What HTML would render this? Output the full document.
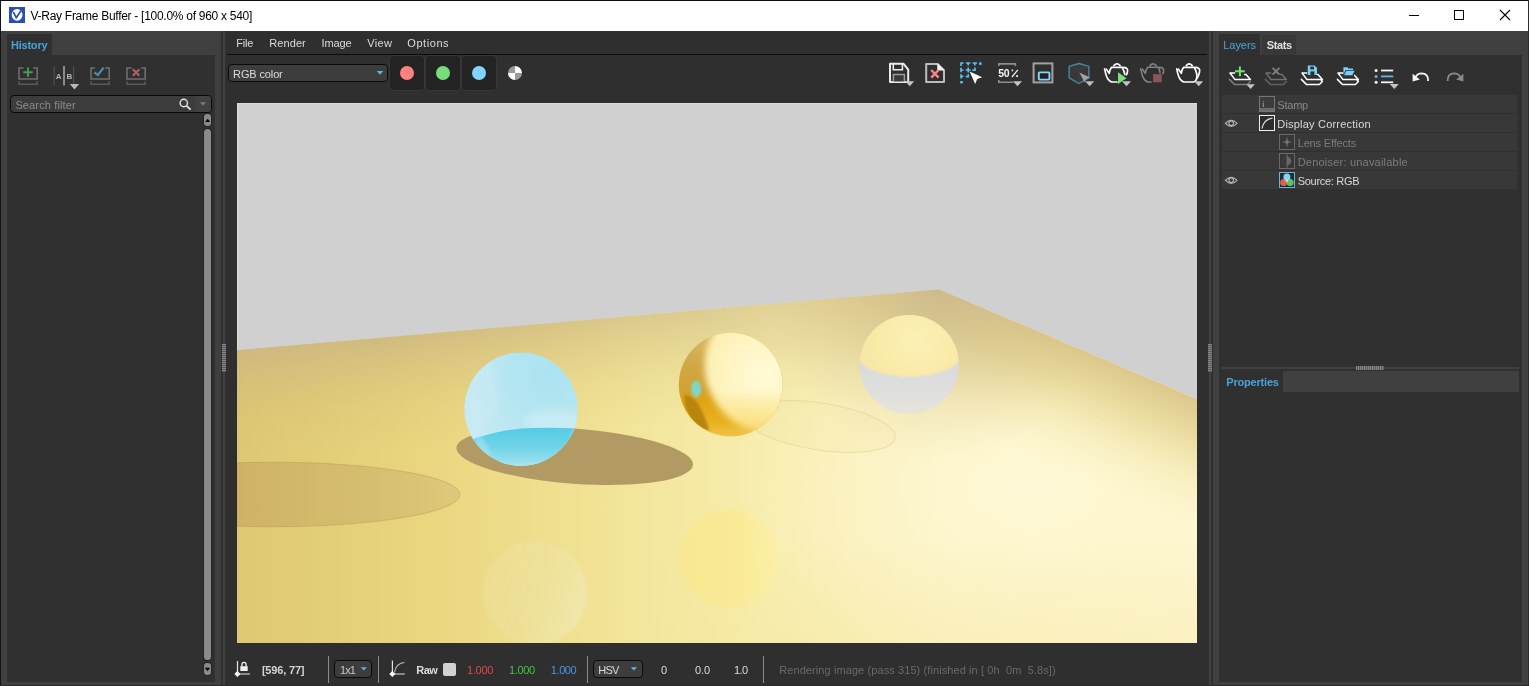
<!DOCTYPE html>
<html lang="en">
<head>
<meta charset="utf-8">
<title>V-Ray Frame Buffer</title>
<style>
html,body{margin:0;padding:0;}
body{width:1529px;height:686px;overflow:hidden;background:#404040;position:relative;font-family:"Liberation Sans",sans-serif;}
.a{position:absolute;}
.tx{position:absolute;line-height:1;white-space:pre;}
.panel{background:#303030;}
.row{position:absolute;left:1222px;width:295px;height:18px;background:#383838;}
.sep{position:absolute;width:1px;top:656px;height:27px;background:#8c8c8c;}
.combo{position:absolute;box-sizing:border-box;border:1px solid #0a0a0a;border-radius:4px;background:#3d3d3d;}
.chbtn{position:absolute;top:55px;width:36px;height:36px;box-sizing:border-box;background:#232323;border:1px solid #373737;border-radius:4px;}
.dot{position:absolute;width:14px;height:14px;border-radius:50%;top:66px;}
svg{position:absolute;overflow:visible;}
</style>
</head>
<body>
<!-- window frame -->
<div class="a" style="left:0;top:0;width:1529px;height:1px;background:#0c0c0c"></div>
<div class="a" style="left:0;top:0;width:1px;height:686px;background:#141414"></div>
<div class="a" style="left:1528px;top:0;width:1px;height:686px;background:#2c2c2c"></div>
<div class="a" style="left:0;top:685px;width:1529px;height:1px;background:#2a2a2a"></div>
<!-- title bar -->
<div class="a" style="left:1px;top:1px;width:1527px;height:30px;background:#ffffff"></div>

<!-- left (History) panel -->
<div class="a panel" style="left:7px;top:34px;width:45px;height:21px;"></div>
<div class="a panel" style="left:7px;top:55px;width:208px;height:627px;"></div>
<div class="combo" style="left:10px;top:95px;width:202px;height:18px;background:#3c3c3c"></div>
<div class="a" style="left:195px;top:96px;width:16px;height:16px;background:#424242;border-radius:0 3px 3px 0"></div>
<!-- scrollbar -->
<div class="a" style="left:204px;top:114px;width:7px;height:12px;background:#8a8a8a;border-radius:3px;box-shadow:0 0 0 1px #242424"></div>
<div class="a" style="left:204px;top:129px;width:7px;height:531px;background:#8a8a8a;border-radius:3.5px;box-shadow:0 0 0 1px #242424"></div>
<div class="a" style="left:204px;top:663px;width:7px;height:12px;background:#8a8a8a;border-radius:3px;box-shadow:0 0 0 1px #242424"></div>

<!-- splitters -->
<div class="a" style="left:221px;top:31px;width:2px;height:654px;background:#303030"></div>
<div class="a" style="left:223px;top:31px;width:2px;height:654px;background:#414141"></div>
<div class="a" style="left:1209px;top:31px;width:2px;height:654px;background:#414141"></div>
<div class="a" style="left:1211px;top:31px;width:2px;height:654px;background:#303030"></div>

<!-- main panel -->
<div class="a" style="left:225px;top:31px;width:984px;height:654px;background:#2f2f2f"></div>
<div class="a" style="left:227px;top:54px;width:980px;height:1px;background:#0c0c0c"></div>
<div class="a" style="left:222px;top:344px;width:4px;height:28px;background:repeating-linear-gradient(to bottom,#858585 0,#858585 1px,#5c5c5c 1px,#5c5c5c 2px)"></div>
<div class="a" style="left:1208px;top:344px;width:4px;height:28px;background:repeating-linear-gradient(to bottom,#858585 0,#858585 1px,#5c5c5c 1px,#5c5c5c 2px)"></div>
<div class="combo" style="left:228px;top:64px;width:160px;height:18px;"></div>
<div class="chbtn" style="left:389px"></div>
<div class="chbtn" style="left:425px"></div>
<div class="chbtn" style="left:461px"></div>
<div class="dot" style="left:400px;background:#ff8080"></div>
<div class="dot" style="left:436px;background:#77dd7a"></div>
<div class="dot" style="left:472px;background:#80d4ff"></div>
<div class="dot" style="left:508px;background:conic-gradient(#ffffff 0 90deg,#9a9a9a 90deg 180deg,#ffffff 180deg 270deg,#9a9a9a 270deg 360deg)"></div>

<!-- status bar -->
<div class="sep" style="left:328px"></div>
<div class="sep" style="left:378px"></div>
<div class="sep" style="left:587px"></div>
<div class="sep" style="left:763px"></div>
<div class="combo" style="left:334px;top:660px;width:38px;height:18px;"></div>
<div class="combo" style="left:593px;top:660px;width:50px;height:18px;"></div>
<div class="a" style="left:443px;top:663px;width:13px;height:13px;background:#d2d2d2;border-radius:2px"></div>

<!-- right panel -->
<div class="a panel" style="left:1219px;top:34px;width:41px;height:21px;"></div>
<div class="a" style="left:1262px;top:35px;width:34px;height:20px;background:#383838"></div>
<div class="a panel" style="left:1219px;top:55px;width:303px;height:627px;"></div>
<div class="row" style="top:95px"></div>
<div class="row" style="top:114px"></div>
<div class="row" style="top:133px"></div>
<div class="row" style="top:152px"></div>
<div class="row" style="top:171px"></div>
<div class="a" style="left:1222px;top:367px;width:297px;height:2px;background:#404040"></div>
<div class="a" style="left:1356px;top:366px;width:28px;height:4px;background:repeating-linear-gradient(to right,#858585 0,#858585 1px,#5c5c5c 1px,#5c5c5c 2px)"></div>
<div class="a" style="left:1283px;top:371px;width:236px;height:21px;background:#404040"></div>

<!-- rendered image -->
<svg style="left:237px;top:103px;overflow:hidden" width="960" height="540" viewBox="0 0 960 540">
<defs>
  <linearGradient id="fl_base" gradientUnits="userSpaceOnUse" x1="0" y1="0" x2="960" y2="0">
    <stop offset="0" stop-color="#dec872"/>
    <stop offset="0.2" stop-color="#e9d67f"/>
    <stop offset="0.4" stop-color="#f2e498"/>
    <stop offset="0.55" stop-color="#f7edae"/>
    <stop offset="0.75" stop-color="#fcf4c8"/>
    <stop offset="1" stop-color="#fdf6d0"/>
  </linearGradient>
  <linearGradient id="refl_pale" gradientUnits="userSpaceOnUse" x1="250" y1="470" x2="350" y2="510">
    <stop offset="0" stop-color="#f0eabc" stop-opacity="0.22"/>
    <stop offset="0.5" stop-color="#f0eabc" stop-opacity="0.2"/>
    <stop offset="1" stop-color="#f2ecc6" stop-opacity="0.5"/>
  </linearGradient>
  <radialGradient id="fl_hi" gradientUnits="userSpaceOnUse" cx="790" cy="385" r="300" gradientTransform="translate(790 385) scale(1 0.6) translate(-790 -385)">
    <stop offset="0" stop-color="#fef8d8" stop-opacity="0.9"/>
    <stop offset="0.4" stop-color="#fdf6d0" stop-opacity="0.6"/>
    <stop offset="1" stop-color="#fcf3c6" stop-opacity="0"/>
  </radialGradient>
  <!-- darkening toward far-left edge (perpendicular to the left horizon line) -->
  <linearGradient id="fl_farL" gradientUnits="userSpaceOnUse" x1="351" y1="216.85" x2="360.5" y2="326.4">
    <stop offset="0" stop-color="#cbb682" stop-opacity="0.86"/>
    <stop offset="0.25" stop-color="#ceb880" stop-opacity="0.58"/>
    <stop offset="0.6" stop-color="#d2bb7c" stop-opacity="0.22"/>
    <stop offset="1" stop-color="#d6be78" stop-opacity="0"/>
  </linearGradient>
  <linearGradient id="shL" gradientUnits="userSpaceOnUse" x1="0" y1="0" x2="223" y2="0">
    <stop offset="0" stop-color="#bf9f5c" stop-opacity="0.52"/>
    <stop offset="0.6" stop-color="#c2a562" stop-opacity="0.44"/>
    <stop offset="1" stop-color="#c6aa68" stop-opacity="0.34"/>
  </linearGradient>
  <!-- darkening toward far-right edge -->
  <linearGradient id="fl_farR" gradientUnits="userSpaceOnUse" x1="831" y1="241.2" x2="786" y2="347.2">
    <stop offset="0" stop-color="#dac588" stop-opacity="0.95"/>
    <stop offset="0.3" stop-color="#e2cf8a" stop-opacity="0.7"/>
    <stop offset="0.65" stop-color="#ecdc98" stop-opacity="0.3"/>
    <stop offset="1" stop-color="#f4e6a8" stop-opacity="0"/>
  </linearGradient>
  <radialGradient id="fl_corner" gradientUnits="userSpaceOnUse" cx="702" cy="186" r="170">
    <stop offset="0" stop-color="#c8b68c" stop-opacity="0.7"/>
    <stop offset="0.5" stop-color="#cfbc8a" stop-opacity="0.35"/>
    <stop offset="1" stop-color="#d6c288" stop-opacity="0"/>
  </radialGradient>
  <linearGradient id="mL" gradientUnits="userSpaceOnUse" x1="0" y1="0" x2="960" y2="0">
    <stop offset="0" stop-color="#fff"/>
    <stop offset="0.15" stop-color="#f4f4f4"/>
    <stop offset="0.42" stop-color="#b0b0b0"/>
    <stop offset="1" stop-color="#a8a8a8"/>
  </linearGradient>
  <mask id="maskL" maskUnits="userSpaceOnUse" x="0" y="180" width="960" height="360"><rect x="0" y="180" width="960" height="360" fill="url(#mL)"/></mask>
  <linearGradient id="fl_bot" gradientUnits="userSpaceOnUse" x1="0" y1="440" x2="0" y2="540">
    <stop offset="0" stop-color="#f4e49a" stop-opacity="0"/>
    <stop offset="1" stop-color="#f4e49a" stop-opacity="0.28"/>
  </linearGradient>
  <linearGradient id="refl_yel" gradientUnits="userSpaceOnUse" x1="445" y1="0" x2="542" y2="0">
    <stop offset="0" stop-color="#f9e88e"/>
    <stop offset="0.6" stop-color="#faea94"/>
    <stop offset="1" stop-color="#fdf0a6"/>
  </linearGradient>
  <clipPath id="floorclip"><polygon points="0,247.3 702,186.4 960,296 960,540 0,540"/></clipPath>

  <!-- cyan sphere -->
  <radialGradient id="cy_top" gradientUnits="userSpaceOnUse" cx="312" cy="272" r="105">
    <stop offset="0" stop-color="#abe3f0"/>
    <stop offset="0.35" stop-color="#b2e5f1"/>
    <stop offset="0.7" stop-color="#c0e8f2"/>
    <stop offset="1" stop-color="#cdebf3"/>
  </radialGradient>
  <linearGradient id="cy_low" gradientUnits="userSpaceOnUse" x1="0" y1="325" x2="0" y2="363">
    <stop offset="0" stop-color="#54cbe5"/>
    <stop offset="0.5" stop-color="#6fd4e9"/>
    <stop offset="0.85" stop-color="#93deed"/>
    <stop offset="1" stop-color="#b0e7f1"/>
  </linearGradient>
  <clipPath id="cyclip"><circle cx="284" cy="306.1" r="56.6"/></clipPath>

  <!-- yellow sphere -->
  <linearGradient id="ye_dark" gradientUnits="userSpaceOnUse" x1="0" y1="230" x2="0" y2="334">
    <stop offset="0" stop-color="#dabb66"/>
    <stop offset="0.3" stop-color="#cfa848"/>
    <stop offset="0.56" stop-color="#d3a132"/>
    <stop offset="0.63" stop-color="#e0a216"/>
    <stop offset="0.85" stop-color="#e8b020"/>
    <stop offset="1" stop-color="#f0c548"/>
  </linearGradient>
  <radialGradient id="ye_lit" gradientUnits="userSpaceOnUse" cx="528" cy="272" r="70">
    <stop offset="0" stop-color="#fffad8"/>
    <stop offset="0.5" stop-color="#fef5c4"/>
    <stop offset="0.85" stop-color="#fdf0b4"/>
    <stop offset="1" stop-color="#fbeaa4"/>
  </radialGradient>
  <linearGradient id="ye_low" gradientUnits="userSpaceOnUse" x1="0" y1="288" x2="0" y2="334">
    <stop offset="0" stop-color="#f8dc70" stop-opacity="0"/>
    <stop offset="0.35" stop-color="#f8dc70" stop-opacity="0.4"/>
    <stop offset="1" stop-color="#f3cc48" stop-opacity="0.75"/>
  </linearGradient>
  <clipPath id="yelitclip"><circle cx="536.7" cy="262.2" r="69"/></clipPath>
  <clipPath id="yeclip"><circle cx="493.7" cy="281.6" r="51.9"/></clipPath>

  <!-- glass sphere -->
  <radialGradient id="gl_top" gradientUnits="userSpaceOnUse" cx="680" cy="238" r="62">
    <stop offset="0" stop-color="#fcf0b6"/>
    <stop offset="0.6" stop-color="#f9eaa8"/>
    <stop offset="1" stop-color="#f6e6a4"/>
  </radialGradient>
  <linearGradient id="gl_low" gradientUnits="userSpaceOnUse" x1="0" y1="250" x2="0" y2="311">
    <stop offset="0" stop-color="#d8d8dc"/>
    <stop offset="0.5" stop-color="#dddddd"/>
    <stop offset="0.85" stop-color="#e4e2dc"/>
    <stop offset="1" stop-color="#e7e4d6"/>
  </linearGradient>
  <clipPath id="glclip"><circle cx="672.2" cy="261.5" r="49.6"/></clipPath>
  <filter id="blur2" x="-20%" y="-20%" width="140%" height="140%"><feGaussianBlur stdDeviation="2"/></filter>
  <filter id="blur4" x="-20%" y="-20%" width="140%" height="140%"><feGaussianBlur stdDeviation="3.2"/></filter>
  <filter id="soft" x="-5%" y="-5%" width="110%" height="110%"><feGaussianBlur stdDeviation="0.55"/></filter>
  <filter id="blur1" x="-20%" y="-20%" width="140%" height="140%"><feGaussianBlur stdDeviation="0.8"/></filter>
</defs>

<rect x="0" y="0" width="960" height="540" fill="#d0d0d0"/>
<rect x="0" y="0" width="960" height="1" fill="#dcdcdc"/>
<rect x="0" y="0" width="1" height="247" fill="#dcdcdc"/>
<g clip-path="url(#floorclip)">
  <rect x="0" y="180" width="960" height="360" fill="url(#fl_base)"/>
  <rect x="0" y="180" width="960" height="360" fill="url(#fl_hi)"/>
  <rect x="0" y="180" width="960" height="360" fill="url(#fl_farL)" mask="url(#maskL)"/>
  <rect x="0" y="180" width="960" height="360" fill="url(#fl_farR)"/>
  <rect x="0" y="180" width="960" height="360" fill="url(#fl_corner)"/>
  <rect x="380" y="440" width="580" height="100" fill="url(#fl_bot)"/>

  <!-- reflections -->
  <circle cx="298" cy="490" r="52" fill="url(#refl_pale)" filter="url(#blur1)"/>
  <circle cx="492.5" cy="455.8" r="49" fill="url(#refl_yel)" fill-opacity="0.85" filter="url(#blur2)"/>

  <!-- left big shadow -->
  <ellipse cx="35" cy="391.5" rx="188" ry="32.3" fill="url(#shL)" stroke="#b09050" stroke-opacity="0.4" stroke-width="1"/>
  <!-- glass caustic ellipse -->
  <ellipse cx="583" cy="323.5" rx="76" ry="23.5" transform="rotate(8.6 583 323.5)" fill="#e8d890" fill-opacity="0.10" stroke="#d8c27a" stroke-opacity="0.40" stroke-width="1"/>
  <!-- cyan sphere shadow -->
  <ellipse cx="337.7" cy="353.2" rx="118.6" ry="27.5" transform="rotate(4.2 337.7 353.2)" fill="#b29a65"/>
</g>

<g filter="url(#soft)">
<!-- cyan sphere -->
<circle cx="284" cy="306.1" r="56.6" fill="url(#cy_top)"/>
<g clip-path="url(#cyclip)">
  <ellipse cx="318" cy="318" rx="30" ry="12" fill="#d4f0f6" fill-opacity="0.55" filter="url(#blur4)"/>
  <ellipse cx="245" cy="290" rx="16" ry="34" fill="#cdebf4" fill-opacity="0.5" filter="url(#blur4)"/>
  <path d="M 222,342 Q 250,328.5 284,325.4 Q 312,324 345,325.6 L 345,370 L 222,370 Z" fill="url(#cy_low)"/>
  <ellipse cx="246" cy="345" rx="5" ry="14" transform="rotate(-28 246 345)" fill="#b6e8f2" fill-opacity="0.55" filter="url(#blur2)"/>
  <ellipse cx="338" cy="333" rx="4" ry="9" transform="rotate(20 338 333)" fill="#c6eef5" fill-opacity="0.8" filter="url(#blur1)"/>
</g>

<!-- yellow sphere -->
<circle cx="493.7" cy="281.6" r="51.9" fill="url(#ye_dark)"/>
<g clip-path="url(#yeclip)">
  <path d="M447,291.9 L447.9,300.7 Q448.8,305.5 450.5,309.4 Q452.6,314.2 455.7,318.2 Q459.2,322.4 463.6,325.1 L471.5,327.8 L472.3,327.8 L470.6,321.7 Q468.8,316 466.2,311.2 Q464,305.4 461,300.7 Q457.8,296.4 454,293.7 Q450.4,292 447,291.9 Z" fill="#b4820e" fill-opacity="0.9" filter="url(#blur1)"/>
  <g filter="url(#blur4)">
    <circle cx="536.7" cy="262.2" r="69" fill="url(#ye_lit)"/>
    <g clip-path="url(#yelitclip)"><rect x="440" y="286" width="140" height="60" fill="url(#ye_low)"/></g>
  </g>
  <ellipse cx="459.2" cy="285.8" rx="5" ry="8.4" fill="#80d6c6" filter="url(#blur1)"/>
</g>

<!-- glass sphere -->
<circle cx="672.2" cy="261.5" r="49.6" fill="url(#gl_low)"/>
<g clip-path="url(#glclip)">
  <g filter="url(#blur1)">
    <rect x="615" y="205" width="115" height="48" fill="url(#gl_top)"/>
    <ellipse cx="672.5" cy="252.7" rx="51" ry="21" fill="url(#gl_top)"/>
  </g>
</g>
</g>
</svg>


<!-- icons -->
<svg style="left:0;top:0" width="1529" height="686" viewBox="0 0 1529 686" font-family="Liberation Sans, sans-serif">
<!-- title icon -->
<rect x="9" y="7" width="16" height="16" fill="#2a4fb0"/>
<ellipse cx="17.1" cy="14.8" rx="5.4" ry="5.9" fill="#ffffff"/>
<path d="M13.7 12.6 L16.3 17.8 L20.6 11.2" fill="none" stroke="#2a4fb0" stroke-width="1.7" stroke-linecap="round" stroke-linejoin="round"/>
<!-- window controls -->
<rect x="1409" y="15" width="10" height="1" fill="#000"/>
<rect x="1454.5" y="10.5" width="9" height="9" fill="none" stroke="#000" stroke-width="1"/>
<path d="M1500 10 L1510 20 M1510 10 L1500 20" stroke="#000" stroke-width="1.1" fill="none"/>

<!-- history toolbar -->
<g fill="none" stroke="#6e6e6e" stroke-width="1.6">
  <path d="M23.5 68 H19 V79 H37.2 V68 H33"/>
  <path d="M19 81.5 V84.3 H37.2 V81.5" stroke="#5a5a5a"/>
  <path d="M95 68 H91 V79 H109.2 V68 H105"/>
  <path d="M91 81.5 V84.3 H109.2 V81.5" stroke="#5a5a5a"/>
  <path d="M131.5 68 H127 V79 H145.2 V68 H141"/>
  <path d="M127 81.5 V84.3 H145.2 V81.5" stroke="#5a5a5a"/>
</g>
<path d="M23.3 72.2 H32.6 M27.95 67.4 V76.8" stroke="#4a9a4e" stroke-width="2" fill="none"/>
<path d="M94.4 72.3 L97.9 75 L103.6 67.6" stroke="#4a8cb4" stroke-width="2.2" fill="none"/>
<path d="M132.8 69.2 L139.4 75.8 M139.4 69.2 L132.8 75.8" stroke="#b06060" stroke-width="2.2" fill="none"/>
<rect x="53.6" y="66" width="1" height="19.5" fill="#555"/>
<rect x="63" y="66" width="2" height="19.5" fill="#8a8a8a"/>
<rect x="73.2" y="66" width="1" height="19.5" fill="#555"/>
<text x="55.8" y="79.3" font-size="8" font-weight="700" fill="#b4b4b4">A</text>
<text x="66.6" y="79.3" font-size="8" font-weight="700" fill="#b4b4b4">B</text>
<path d="M69.8 84 H79.2 L74.5 89.4 Z" fill="#b8b8b8"/>
<!-- search -->
<circle cx="183.8" cy="103" r="3.7" fill="none" stroke="#e4e4e4" stroke-width="1.4"/>
<path d="M186.6 105.8 L190.6 109.6" stroke="#e4e4e4" stroke-width="1.8" fill="none"/>
<path d="M200 102.2 H206 L203 105.6 Z" fill="#7c7c7c"/>
<!-- scrollbar arrows -->
<path d="M205.2 122 H210.2 L207.7 118.7 Z" fill="#000"/>
<path d="M204.8 667.8 H210.2 L207.5 671.2 Z" fill="#000"/>
<!-- combo arrows -->
<path d="M376.8 71.1 H383.2 L380 74.7 Z" fill="#5db7e0"/>
<path d="M360.8 667.2 H366.8 L363.8 670.6 Z" fill="#5db7e0"/>
<path d="M630.8 667.2 H637 L633.9 670.6 Z" fill="#5db7e0"/>

<!-- main toolbar: save -->
<path d="M890 63.8 H903.6 L908.2 69.6 V82 H890 Z" fill="none" stroke="#ececec" stroke-width="2" stroke-linejoin="round"/>
<path d="M893.3 64 V69.8 H902.4 V64" fill="none" stroke="#ececec" stroke-width="1.6"/>
<path d="M893.4 81.5 V74.6 H904.4 V81.5" fill="#3a3a3a" stroke="#9a9a9a" stroke-width="1.5"/>
<path d="M905.2 81.2 H914.2 L909.7 86.3 Z" fill="#c2c6ca"/>
<!-- clear -->
<path d="M926.2 64 H937.6 L944 70.2 V82 H926.2 Z" fill="none" stroke="#bcbcbc" stroke-width="2" stroke-linejoin="round"/>
<path d="M937.8 64.2 V70 H943.8 Z" fill="#f2f2f2" stroke="#f2f2f2" stroke-width="1" stroke-linejoin="round"/>
<path d="M931.2 70 L938.6 77.6 M938.6 70 L931.2 77.6" stroke="#ff8585" stroke-width="2.4" fill="none"/>
<!-- region select -->
<g fill="#5ec0ee">
  <path d="M960.2 62.3 H963.6 V63.8 H961.8 V66 H960.2 Z"/>
  <path d="M966 62.3 H970.4 V63.8 H969 V65.6 H967.4 V63.8 H966 Z"/>
  <path d="M972.6 62.3 H977 V63.8 H975.6 V65.6 H974 V63.8 H972.6 Z"/>
  <rect x="979" y="62.4" width="2.6" height="2.4"/>
  <path d="M960.2 67.8 H961.8 V69.2 H963.4 V70.8 H961.8 V72.2 H960.2 Z"/>
  <path d="M960.2 74.2 H961.8 V75.6 H963.4 V77.2 H961.8 V78.6 H960.2 Z"/>
  <rect x="960.2" y="81" width="2.6" height="2.4"/>
  <path d="M967.4 67.6 H969 V69.2 H970.6 V70.8 H969 V72.4 H967.4 V70.8 H965.8 V69.2 H967.4 Z"/>
  <path d="M972.4 69.3 H974.2 V67.6 H975.8 V70.9 H972.4 Z"/>
  <path d="M965.8 75.8 H967.5 V74.2 H969.1 V77.4 H965.8 Z"/>
</g>
<path d="M969.6 71.6 L982.2 77.2 L977.2 79 L975.2 83.9 Z" fill="#ffffff"/>
<!-- 50% -->
<path d="M998.8 66 V63.9 H1015.4 V66" fill="none" stroke="#8e8e8e" stroke-width="1.6"/>
<path d="M998.8 80 V82.2 H1013.4" fill="none" stroke="#8e8e8e" stroke-width="1.6"/>
<text x="998.2" y="77" font-size="10.5" font-weight="700" fill="#f4f4f4" letter-spacing="-0.4">50</text>
<path d="M1012 77 L1017.8 69.8" stroke="#f4f4f4" stroke-width="1.2" fill="none"/>
<rect x="1016.2" y="75.2" width="1.8" height="1.8" fill="#f4f4f4"/>
<rect x="1011.6" y="69.6" width="1.6" height="1.6" fill="#f4f4f4"/>
<path d="M1013 81.2 H1022 L1017.5 86.3 Z" fill="#c2c6ca"/>
<!-- region render -->
<rect x="1033.6" y="63.4" width="18.8" height="19" fill="none" stroke="#a2a2a2" stroke-width="2"/>
<rect x="1038.8" y="72.4" width="10.6" height="7.2" fill="#242020" stroke="#80d4ff" stroke-width="1.9" rx="0.8"/>
<!-- cube + cursor -->
<path d="M1078.9 63.5 L1088.9 66.4 V77.8 L1078.9 83.5 L1069.2 77.8 V66.4 Z" fill="#383838" stroke="#4a86a6" stroke-width="1.4" stroke-linejoin="round"/>
<path d="M1070 66.8 L1078.9 69.6 L1088 66.8 M1078.9 69.6 V82.6" stroke="#444" stroke-width="0.8" fill="none"/>
<path d="M1079.4 72.6 L1090 77.4 L1086 79 L1084.6 82.6 Z" fill="#a2a2a2"/>
<path d="M1085.2 81.2 H1094.2 L1089.7 86.3 Z" fill="#bebebe"/>
<!-- teapot render -->
<g fill="none" stroke="#ffffff" stroke-width="1.7" stroke-linecap="round" stroke-linejoin="round">
  <path d="M1113.9 65.6 Q1117 62.2 1120.1 65.6"/>
  <path d="M1104.6 68.8 Q1106.4 78.4 1109.2 80.4 Q1110.6 82 1112.4 82 H1117"/>
  <path d="M1106.4 69.2 L1109.2 73.4 Q1110 68.6 1111.8 67.3 H1122.2 Q1124 70.6 1124.8 74.4"/>
  <path d="M1123 67.4 Q1128.6 67.4 1127.4 72 Q1127 73.8 1126.4 74.8"/>
</g>
<path d="M1118 72.3 V84.1 L1126.5 78.2 Z" fill="#78e07c"/>
<path d="M1122 81.2 H1131 L1126.5 86.3 Z" fill="#c2c6ca"/>
<!-- teapot stop (dim) -->
<g fill="none" stroke="#828282" stroke-width="1.6" stroke-linecap="round" stroke-linejoin="round">
  <path d="M1150 65.6 Q1153.1 62.2 1156.2 65.6"/>
  <path d="M1140.7 68.8 Q1142.5 78.4 1145.3 80.4 Q1146.7 82 1148.5 82 H1151"/>
  <path d="M1142.5 69.2 L1145.3 73.4 Q1146.1 68.6 1147.9 67.3 H1158.3 Q1159.6 69.6 1160 72.6"/>
  <path d="M1159.1 67.4 Q1164.7 67.4 1163.5 72 Q1163.2 73 1162.8 73.6"/>
</g>
<rect x="1153.1" y="74.1" width="8.6" height="8.2" fill="#8a5555"/>
<!-- teapot 3 -->
<g fill="none" stroke="#ffffff" stroke-width="1.7" stroke-linecap="round" stroke-linejoin="round">
  <path d="M1186.2 65.6 Q1189.2 62.2 1192.2 65.6"/>
  <path d="M1176.7 68.8 Q1178.5 78.4 1181.3 80.4 Q1182.7 82 1184.5 82 H1193.6 Q1195.6 81.6 1196.4 79.4 Q1197.6 76 1196.6 73.6 Q1195.8 70 1194.2 67.3 H1183.9 Q1182.1 68.6 1181.3 73.4 L1178.5 69.2"/>
  <path d="M1195.1 67.4 Q1200.7 67.4 1199.5 72 Q1198.8 75.6 1197.2 78"/>
</g>
<path d="M1194.2 81.2 H1203.2 L1198.7 86.3 Z" fill="#c2c6ca"/>

<!-- layers toolbar -->
<g fill="none" stroke-width="1.5" stroke-linejoin="round" stroke-linecap="round">
  <!-- add -->
  <path d="M1234.6 73 H1230 L1235 79.6 H1250.4 L1246 74.6 H1244.6" stroke="#ffffff"/>
  <path d="M1229.4 79.4 L1234.6 84.6 H1247.4 L1250.4 81.4" stroke="#7c7c7c"/>
  <!-- delete -->
  <path d="M1270.6 73 H1266 L1271 79.6 H1286.4 L1282 74.6 H1280.6" stroke="#707070"/>
  <path d="M1265.4 79.4 L1270.6 84.6 H1283.4 L1286.4 81.4" stroke="#606060"/>
  <!-- save -->
  <path d="M1306.6 73 H1302 L1307 79.6 H1322.4 L1318 74.6 H1317.6" stroke="#ffffff"/>
  <path d="M1301.4 79.4 L1306.6 84.6 H1319.4 L1322.4 81.4 L1321 80" stroke="#ffffff"/>
  <!-- load -->
  <path d="M1342.6 73 H1338 L1343 79.6 H1358.4 L1354.6 75.4" stroke="#ffffff"/>
  <path d="M1337.4 79.4 L1342.6 84.6 H1355.4 L1358.4 81.4 L1357 80" stroke="#ffffff"/>
</g>
<path d="M1235 71.3 H1244.8 M1239.9 66.4 V76.2" stroke="#72e472" stroke-width="2" fill="none"/>
<path d="M1246.4 84.3 H1254.8 L1250.6 89 Z" fill="#c2c6ca"/>
<path d="M1272.6 67.8 L1279.4 74.6 M1279.4 67.8 L1272.6 74.6" stroke="#808080" stroke-width="1.9" fill="none"/>
<path d="M1307.8 65.6 H1314.6 L1317 68 V75 H1307.8 Z" fill="#78d0fa"/>
<rect x="1310.2" y="66.6" width="3.8" height="2.8" fill="#303030"/>
<rect x="1310.4" y="71.4" width="4" height="3.6" fill="#303030"/>
<path d="M1343.4 67.2 H1347.4 L1348.6 68.6 H1353 V70 H1345.6 L1343.4 75 Z" fill="#78d0fa"/>
<path d="M1346.4 70.8 H1354.6 L1352.2 75.2 H1344 Z" fill="#78d0fa"/>
<!-- list -->
<g stroke-width="1.8" fill="none">
  <path d="M1381 70.5 H1393.2" stroke="#f4f4f4"/>
  <path d="M1381 76.4 H1393.2" stroke="#5db7e0"/>
  <path d="M1381 82.3 H1393.2" stroke="#f4f4f4"/>
</g>
<circle cx="1376.1" cy="70.5" r="1.5" fill="#f4f4f4"/>
<circle cx="1376.1" cy="76.4" r="1.5" fill="#5db7e0"/>
<circle cx="1376.1" cy="82.3" r="1.5" fill="#f4f4f4"/>
<path d="M1389.8 84 H1398.8 L1394.3 89 Z" fill="#c2c6ca"/>
<!-- undo -->
<path d="M1428.2 81 Q1428.4 73.6 1421.6 73.4 Q1417.6 73.4 1415.6 77" fill="none" stroke="#f4f4f4" stroke-width="1.8"/>
<path d="M1412.6 73.8 V81.4 L1419.8 79.6 Z" fill="#f4f4f4"/>
<!-- redo -->
<path d="M1447.6 81 Q1447.4 73.6 1454.2 73.4 Q1458.2 73.4 1460.2 77" fill="none" stroke="#8a8a8a" stroke-width="1.8"/>
<path d="M1463.4 73.8 V81.4 L1456.2 79.6 Z" fill="#8a8a8a"/>

<!-- layer row icons -->
<rect x="1259.5" y="96.5" width="15" height="15" fill="#3c3c3c" stroke="#767676" stroke-width="1"/>
<rect x="1260" y="108" width="14" height="3" fill="#6c6c6c"/>
<text x="1262.3" y="106.6" font-size="8" font-weight="700" fill="#8a8a8a" font-family="Liberation Serif, serif">i</text>
<rect x="1259.5" y="115.5" width="15" height="15" fill="#2c2c2c" stroke="#f0f0f0" stroke-width="1"/>
<path d="M1262 128.6 Q1263.4 119.4 1272.6 118" fill="none" stroke="#e8e8e8" stroke-width="1.1"/>
<rect x="1279.5" y="134.5" width="15" height="15" fill="#363636" stroke="#6a6a6a" stroke-width="1"/>
<path d="M1282.4 142 H1291.6 M1287 137.4 V146.6" stroke="#6e6e6e" stroke-width="1.2" fill="none"/>
<circle cx="1287" cy="142" r="1.8" fill="#7a7a7a"/>
<rect x="1279.5" y="153.5" width="15" height="15" fill="#363636" stroke="#6a6a6a" stroke-width="1"/>
<path d="M1287 156.6 A4.4 4.4 0 0 1 1287 165.4 Z" fill="#666"/>
<path d="M1287 156.6 A4.4 4.4 0 0 0 1287 165.4" fill="none" stroke="#5a5a5a" stroke-width="0.9" stroke-dasharray="1.4 1.2"/>
<rect x="1286.5" y="154" width="1" height="14" fill="#6a6a6a"/>
<rect x="1279.5" y="172.5" width="15" height="15" fill="#2a2a2a" stroke="#5db7e0" stroke-width="1"/>
<circle cx="1283.7" cy="182.4" r="3.5" fill="#e2604e"/>
<circle cx="1290.1" cy="182.4" r="3.5" fill="#5cc460"/>
<circle cx="1286.9" cy="177" r="3.5" fill="#80d4ff"/>
<circle cx="1286.9" cy="180.8" r="1.3" fill="#ecdca0"/>
<!-- eyes -->
<g fill="none" stroke="#b4b4b4" stroke-width="1.1">
  <path d="M1225.4 123.4 Q1231.2 117 1237 123.4 Q1231.2 129.6 1225.4 123.4 Z"/>
  <circle cx="1231.2" cy="123.2" r="2.3"/>
  <path d="M1225.4 180.4 Q1231.2 174 1237 180.4 Q1231.2 186.6 1225.4 180.4 Z"/>
  <circle cx="1231.2" cy="180.2" r="2.3"/>
</g>

<!-- status bar icons -->
<path d="M237.5 661 V674 M237.5 674 H250" stroke="#e4e4e4" stroke-width="1.2" fill="none"/>
<path d="M237.4 670.9 L240.4 673.9 L237.4 676.9 L234.4 673.9 Z" fill="#ffffff"/>
<rect x="240.3" y="666.2" width="7.4" height="4.8" fill="#f0f0f0"/>
<path d="M241.9 666.4 V664.6 A2.1 2.3 0 0 1 246.1 664.6 V666.4" fill="none" stroke="#f0f0f0" stroke-width="1.3"/>
<path d="M392.4 660.6 V674 M392.4 674 H404.8" stroke="#e4e4e4" stroke-width="1.2" fill="none"/>
<path d="M392.3 670.9 L395.3 673.9 L392.3 676.9 L389.3 673.9 Z" fill="#ffffff"/>
<path d="M394.6 672.4 Q395.6 663.6 404.4 662.4" fill="none" stroke="#b0b0b0" stroke-width="1.1"/>
</svg>


<!-- texts -->
<span class="tx" id="t_title" style="left:30.5px;top:10.44px;font-size:12px;font-weight:400;color:#000000;letter-spacing:-0.279px">V-Ray Frame Buffer - [100.0% of 960 x 540]</span>
<span class="tx" id="t_hist" style="left:10.9px;top:39.69px;font-size:11px;font-weight:700;color:#48a4d8;letter-spacing:-0.201px">History</span>
<span class="tx" id="t_search" style="left:15.4px;top:99.69px;font-size:11px;font-weight:400;color:#8c8c8c;letter-spacing:0.133px">Search filter</span>
<span class="tx" id="t_file" style="left:236.2px;top:37.69px;font-size:11px;font-weight:400;color:#dcdcdc;letter-spacing:-0.145px">File</span>
<span class="tx" id="t_render" style="left:269.2px;top:37.69px;font-size:11px;font-weight:400;color:#dcdcdc;letter-spacing:0.104px">Render</span>
<span class="tx" id="t_image" style="left:321.5px;top:37.69px;font-size:11px;font-weight:400;color:#dcdcdc;letter-spacing:-0.120px">Image</span>
<span class="tx" id="t_view" style="left:367.3px;top:37.69px;font-size:11px;font-weight:400;color:#dcdcdc;letter-spacing:0.315px">View</span>
<span class="tx" id="t_options" style="left:407.3px;top:37.69px;font-size:11px;font-weight:400;color:#dcdcdc;letter-spacing:0.563px">Options</span>
<span class="tx" id="t_rgb" style="left:233.1px;top:69.49px;font-size:11px;font-weight:400;color:#dcdcdc;letter-spacing:-0.131px">RGB color</span>
<span class="tx" id="t_layers" style="left:1223.3px;top:39.69px;font-size:11px;font-weight:400;color:#48a4d8;letter-spacing:-0.066px">Layers</span>
<span class="tx" id="t_stats" style="left:1266.8px;top:39.69px;font-size:11px;font-weight:700;color:#e0e0e0;letter-spacing:-0.402px">Stats</span>
<span class="tx" id="t_stamp" style="left:1277.3px;top:100.29px;font-size:11px;font-weight:400;color:#8a8a8a;letter-spacing:-0.224px">Stamp</span>
<span class="tx" id="t_disp" style="left:1277.3px;top:119.29px;font-size:11px;font-weight:400;color:#dadada;letter-spacing:0.201px">Display Correction</span>
<span class="tx" id="t_lens" style="left:1297.7px;top:138.29px;font-size:11px;font-weight:400;color:#7c7c7c;letter-spacing:-0.159px">Lens Effects</span>
<span class="tx" id="t_den" style="left:1297.7px;top:157.29px;font-size:11px;font-weight:400;color:#7c7c7c;letter-spacing:0.210px">Denoiser: unavailable</span>
<span class="tx" id="t_src" style="left:1297.7px;top:176.29px;font-size:11px;font-weight:400;color:#dadada;letter-spacing:-0.291px">Source: RGB</span>
<span class="tx" id="t_props" style="left:1226.3px;top:377.29px;font-size:11px;font-weight:700;color:#48a4d8;letter-spacing:-0.191px">Properties</span>
<span class="tx" id="t_coord" style="left:261.9px;top:664.89px;font-size:11px;font-weight:700;color:#d4d4d4;letter-spacing:-0.179px">[596, 77]</span>
<span class="tx" id="t_1x1" style="left:339.9px;top:664.59px;font-size:11px;font-weight:400;color:#c8c8c8;letter-spacing:-0.850px">1x1</span>
<span class="tx" id="t_raw" style="left:416.3px;top:664.59px;font-size:11px;font-weight:700;color:#dcdcdc;letter-spacing:-0.613px">Raw</span>
<span class="tx" id="t_r" style="left:467.1px;top:664.59px;font-size:11px;font-weight:400;color:#e04a4a;letter-spacing:-0.333px">1.000</span>
<span class="tx" id="t_g" style="left:509.0px;top:664.59px;font-size:11px;font-weight:400;color:#3fc83f;letter-spacing:-0.358px">1.000</span>
<span class="tx" id="t_b" style="left:550.8px;top:664.59px;font-size:11px;font-weight:400;color:#4a96e6;letter-spacing:-0.408px">1.000</span>
<span class="tx" id="t_hsv" style="left:598.3px;top:664.59px;font-size:11px;font-weight:400;color:#dcdcdc;letter-spacing:-0.850px">HSV</span>
<span class="tx" id="t_h" style="left:661.0px;top:664.59px;font-size:11px;font-weight:400;color:#dcdcdc;letter-spacing:0.000px">0</span>
<span class="tx" id="t_s" style="left:695.0px;top:664.59px;font-size:11px;font-weight:400;color:#dcdcdc;letter-spacing:-0.148px">0.0</span>
<span class="tx" id="t_v" style="left:734.0px;top:664.59px;font-size:11px;font-weight:400;color:#dcdcdc;letter-spacing:-0.648px">1.0</span>
<span class="tx" id="t_status" style="left:779.2px;top:664.59px;font-size:11px;font-weight:400;color:#6a6a6a;letter-spacing:0.091px">Rendering image (pass 315) (finished in [ 0h  0m  5.8s])</span>
</body>
</html>
